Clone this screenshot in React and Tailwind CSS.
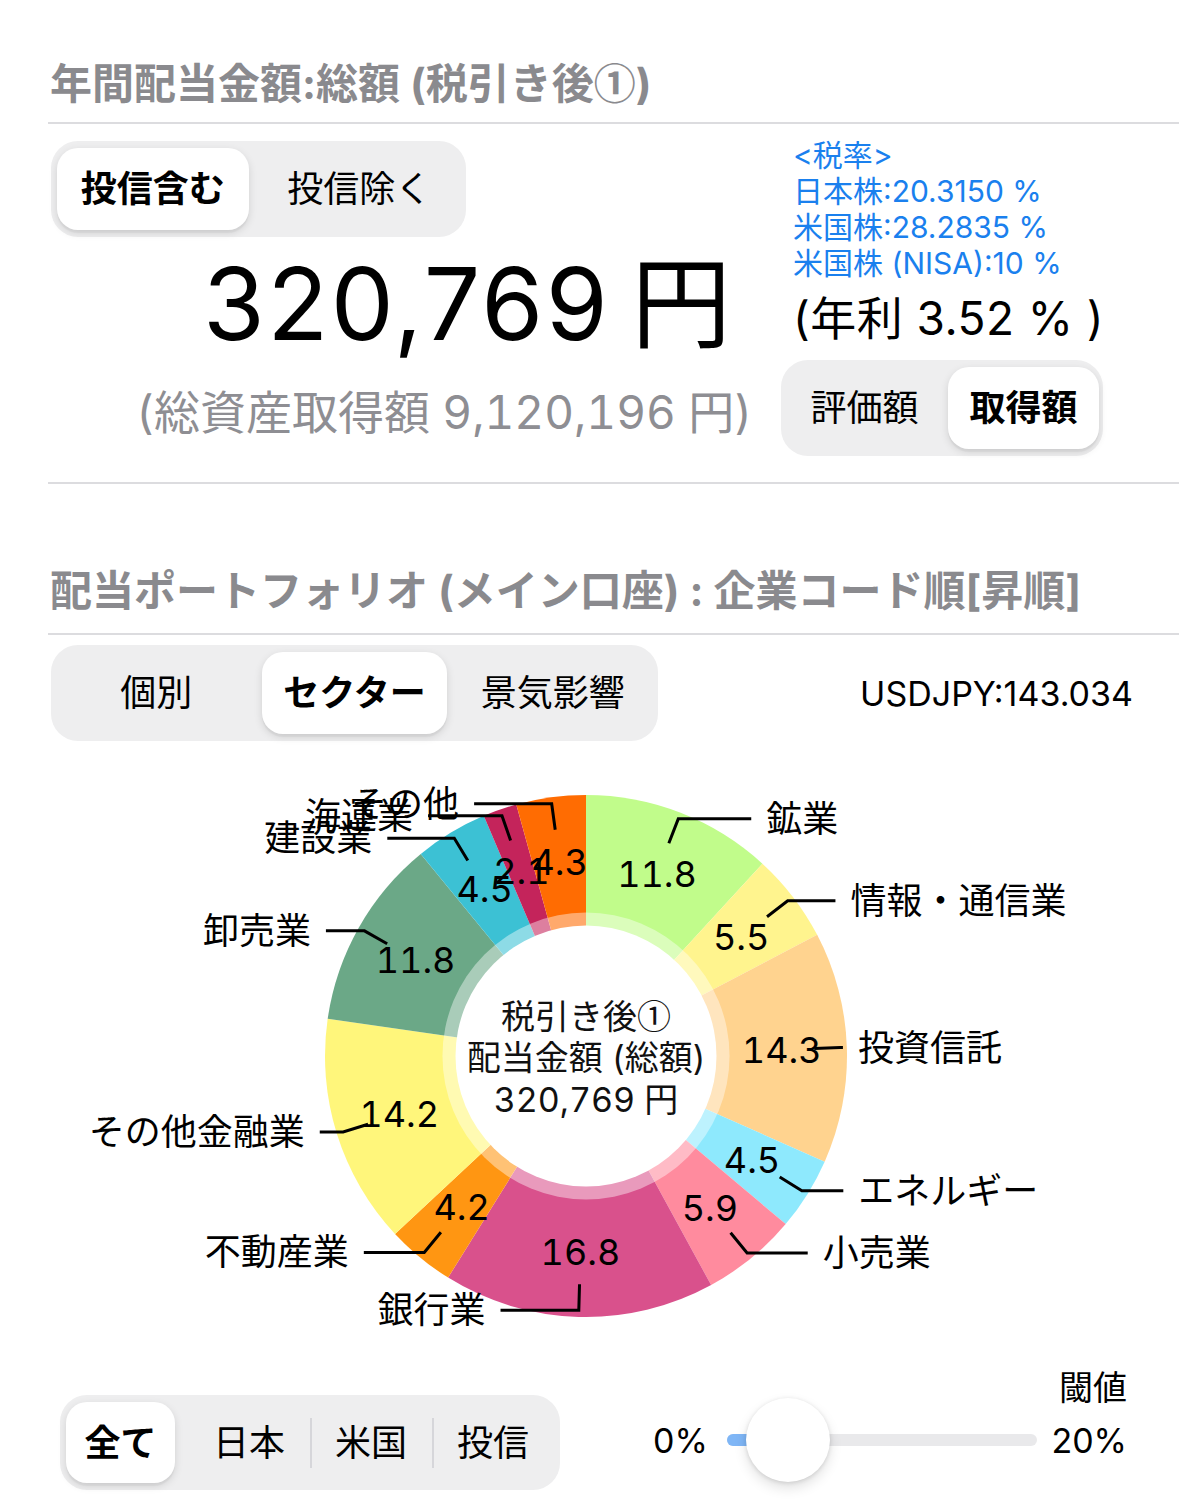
import React from "react";

const sectors = [
  { name: "鉱業", value: 11.8, color: "#c1fc8b" },
  { name: "情報・通信業", value: 5.5, color: "#fff48e" },
  { name: "投資信託", value: 14.3, color: "#ffd38f" },
  { name: "エネルギー", value: 4.5, color: "#8ee9fd" },
  { name: "小売業", value: 5.9, color: "#ff8b9e" },
  { name: "銀行業", value: 16.8, color: "#d9518c" },
  { name: "不動産業", value: 4.2, color: "#ff9612" },
  { name: "その他金融業", value: 14.2, color: "#fff67b" },
  { name: "卸売業", value: 11.8, color: "#6ba887" },
  { name: "建設業", value: 4.5, color: "#3cc1d4" },
  { name: "海運業", value: 2.1, color: "#c4245b" },
  { name: "その他", value: 4.3, color: "#ff6c02" },
];

const FONT = "Inter, 'Noto Sans CJK JP', sans-serif";
const CJK = "'Noto Sans CJK JP', sans-serif";

// 選択中のセグメント
const pillClass =
  "bg-white rounded-[21px] shadow-[0_3px_8px_rgba(0,0,0,0.12),0_3px_1px_rgba(0,0,0,0.04)] font-semibold";

const Segmented = ({ items, selected, pillMargin, className }) => (
  <div className={`flex rounded-[27px] bg-[#eeeeef] p-[7px_6px] ${className}`}>
    {items.map((label, i) => (
      <div key={label} className="relative flex flex-1">
        {/* 区切り線 */}
        {i > 0 && i !== selected && i - 1 !== selected && (
          <div className="absolute left-0 top-1/2 h-[50px] w-[2px] -translate-y-1/2 bg-[#d6d6da]" />
        )}
        <div
          className={`flex flex-1 items-center justify-center text-[36px] text-black ${
            i === selected ? `${pillClass} ${pillMargin}` : ""
          }`}
        >
          {label}
        </div>
      </div>
    ))}
  </div>
);

const DonutChart = () => {
  const cx = 586;
  const cy = 315;
  const R = 261;
  const hole = R * 0.5;
  const ring = R * 0.55;
  const labelR = R - (R - hole) / 2;
  const line1R = (R - hole) * 0.75 + hole;
  const line2R = labelR * 1.3;

  const total = sectors.reduce((a, s) => a + s.value, 0);
  const pt = (r, deg) => {
    const rad = (deg * Math.PI) / 180;
    return [cx + r * Math.sin(rad), cy - r * Math.cos(rad)];
  };

  let acc = 0;
  const slices = sectors.map((s) => {
    const start = (acc / total) * 360;
    acc += s.value;
    const end = (acc / total) * 360;
    return { ...s, start, end, mid: (start + end) / 2 };
  });

  return (
    <svg width="1179" height="627" className="block" fontFamily={FONT}>
      {slices.map((s) => {
        const [x1, y1] = pt(R, s.start);
        const [x2, y2] = pt(R, s.end);
        const large = s.end - s.start > 180 ? 1 : 0;
        return (
          <path
            key={s.name}
            d={`M${cx} ${cy} L${x1} ${y1} A${R} ${R} 0 ${large} 1 ${x2} ${y2} Z`}
            fill={s.color}
          />
        );
      })}
      <circle cx={cx} cy={cy} r={ring} fill="rgba(255,255,255,0.42)" />
      <circle cx={cx} cy={cy} r={hole} fill="#fff" />

      <text x={cx} y={cy - 42} textAnchor="middle" dominantBaseline="central" fontSize="34" fill="#111" fontFamily={CJK}>
        税引き後①
      </text>
      <text x={cx} y={cy + 1} textAnchor="middle" dominantBaseline="central" fontSize="34" fill="#111">
        配当金額 (総額)
      </text>
      <text x={cx} y={cy + 43} textAnchor="middle" dominantBaseline="central" fontSize="34" fill="#111" className="tabular-nums">
        320,769 円
      </text>

      {slices.map((s) => {
        const rad = (s.mid * Math.PI) / 180;
        const [vx, vy] = pt(labelR, s.mid);
        const [ax, ay] = pt(line1R, s.mid);
        const [bx, by] = pt(line2R, s.mid);
        const right = s.mid < 180;
        const len = labelR * 0.4 * Math.abs(Math.cos(rad));
        const ex = right ? bx + len : bx - len;
        return (
          <g key={s.name + "-v"}>
            <polyline
              points={`${ax},${ay} ${bx},${by} ${ex},${by}`}
              fill="none"
              stroke="#000"
              strokeWidth="3"
            />
            <text
              x={vx}
              y={vy}
              textAnchor="middle"
              dominantBaseline="central"
              fontSize="36"
              fill="#000"
              className="tabular-nums"
            >
              {s.value.toFixed(1)}
            </text>
            <text
              x={right ? ex + 15 : ex - 15}
              y={by}
              textAnchor={right ? "start" : "end"}
              dominantBaseline="central"
              fontSize="36"
              fill="#000"
            >
              {s.name}
            </text>
          </g>
        );
      })}
    </svg>
  );
};

const App = () => {
  return (
    <div className="min-h-[1500px] w-[1179px] bg-white pt-[53px] font-['Inter','Noto_Sans_CJK_JP',sans-serif] text-black">
      {/* 年間配当金額 */}
      <div className="pl-[48px]">
        <div className="h-[56px] pl-[2px] text-[42px] font-bold leading-[56px] text-[#8a8a8e]">
          年間配当金額:総額 (税引き後<span className="font-['Noto_Sans_CJK_JP',sans-serif]">①</span>)
        </div>
        <div className="mt-[13px] h-[2px] bg-[#dcdcdf]" />

        <div className="flex">
          <div className="w-[733px]">
            <Segmented
              items={["投信含む", "投信除く"]}
              selected={0}
              pillMargin="mr-[10px]"
              className="ml-[3px] mt-[17px] h-[96px] w-[415px]"
            />
            <div className="mt-[17px] h-[100px] pl-[155px] text-[100px] leading-[100px]">
              <span className="tracking-[0.025em]">320,769</span>
              <span className="ml-[21px]">円</span>
            </div>
            <div className="mt-[30px] pl-[88px] text-[46px] leading-[56px] text-[#8e8e93] tabular-nums">
              (総資産取得額 9,120,196 円)
            </div>
          </div>

          <div>
            <div className="mt-[13px] pl-[12px] text-[30px] leading-[36px] text-[#1a80ee]">
              <div>&lt;税率&gt;</div>
              <div>日本株:20.3150 %</div>
              <div>米国株:28.2835 %</div>
              <div>米国株 (NISA):10 %</div>
            </div>
            <div className="mt-[9px] pl-[12px] text-[46px] leading-[56px] tracking-[0.01em]">(年利 3.52 % )</div>
            <Segmented
              items={["評価額", "取得額"]}
              selected={1}
              pillMargin="ml-[6px] -mr-[2px]"
              className="mt-[14px] h-[96px] w-[322px]"
            />
          </div>
        </div>

        <div className="mt-[26px] h-[2px] bg-[#dcdcdf]" />

        {/* 配当ポートフォリオ */}
        <div className="mt-[79px] h-[56px] pl-[2px] text-[42px] font-bold leading-[56px] text-[#8a8a8e]">
          配当ポートフォリオ (メイン口座) : 企業コード順[昇順]
        </div>
        <div className="mt-[14px] h-[2px] bg-[#dcdcdf]" />

        <div className="mt-[10px] flex items-center">
          <Segmented
            items={["個別", "セクター", "景気影響"]}
            selected={1}
            pillMargin="mx-[7px]"
            className="ml-[3px] h-[96px] w-[607px]"
          />
          <div className="ml-auto pr-[46px] text-[34px]">USDJPY:143.034</div>
        </div>
      </div>

      <DonutChart />

      {/* フィルタ・閾値 */}
      <div className="flex items-start">
        <Segmented
          items={["全て", "日本", "米国", "投信"]}
          selected={0}
          pillMargin="mr-[13px]"
          className="ml-[60px] mt-[27px] h-[95px] w-[500px]"
        />
        <div className="ml-auto mr-[52px] w-[474px]">
          <div className="text-right text-[34px] leading-[40px]">閾値</div>
          <div className="flex h-[64px] items-center">
            <div className="w-[75px] text-[34px]">0%</div>
            <div className="relative h-[12px] w-[315px] rounded-full bg-[#e9e9eb]">
              <div className="h-full w-[61px] rounded-l-full bg-[#7fb6f6]" />
              <div className="absolute left-[19px] top-1/2 h-[84px] w-[84px] -translate-y-1/2 rounded-full bg-white shadow-[0_6px_13px_rgba(0,0,0,0.12),0_1px_4px_rgba(0,0,0,0.12)]" />
            </div>
            <div className="pl-[14px] text-[34px]">20%</div>
          </div>
        </div>
      </div>
    </div>
  );
};

export default App;
